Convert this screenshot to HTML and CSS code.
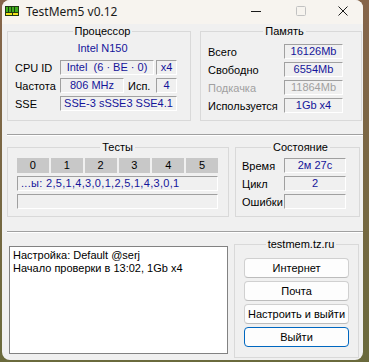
FILE: index.html
```html
<!DOCTYPE html>
<html lang="ru">
<head>
    <meta charset="UTF-8">
    <title>TestMem5 v0.12</title>
    <link rel="stylesheet" href="styles.css">
</head>
<body>

<div class="window">

    <!-- Title bar -->
    <div class="titlebar">
        <svg class="app-icon" width="14" height="10" viewBox="0 0 14 10">
            <rect x="0" y="0" width="14" height="10" fill="#1e3a10"/>
            <rect x="1" y="1" width="12" height="5" fill="#3fae1c"/>
            <rect x="3" y="1" width="1" height="5" fill="#1e3a10"/>
            <rect x="6" y="1" width="1" height="5" fill="#1e3a10"/>
            <rect x="9" y="1" width="1" height="5" fill="#1e3a10"/>
            <rect x="1" y="7" width="12" height="2" fill="#f2e21a"/>
            <rect x="7" y="7" width="1" height="2" fill="#1e3a10"/>
        </svg>
        <span class="title">TestMem5 v0.12</span>
        <div class="caption">
            <div class="cap">
                <svg width="10" height="10" viewBox="0 0 10 10"><line x1="0" y1="5.5" x2="10" y2="5.5" stroke="#1a1a1a" stroke-width="1"/></svg>
            </div>
            <div class="cap">
                <svg width="10" height="10" viewBox="0 0 10 10"><rect x="0.5" y="0.5" width="9" height="9" rx="1" fill="none" stroke="#c2c2c2" stroke-width="1"/></svg>
            </div>
            <div class="cap cap-close">
                <svg width="10" height="10" viewBox="0 0 10 10"><path d="M0.5 0.5 L9.5 9.5 M9.5 0.5 L0.5 9.5" stroke="#1a1a1a" stroke-width="1"/></svg>
            </div>
        </div>
    </div>

    <div class="client">

        <!-- Processor / Memory -->
        <div class="row-top">
            <div class="group group-cpu">
                <div class="group-title">Процессор</div>
                <div class="cpu-name">Intel N150</div>
                <div class="fields">
                    <div class="frow">
                        <span class="lbl">CPU ID</span>
                        <span class="box w94">Intel&nbsp; (6 · BE · 0)</span>
                        <span class="box w21 ml2">x4</span>
                    </div>
                    <div class="frow">
                        <span class="lbl">Частота</span>
                        <span class="box w64">806 MHz</span>
                        <span class="lbl-small">Исп.</span>
                        <span class="box w21">4</span>
                    </div>
                    <div class="frow">
                        <span class="lbl">SSE</span>
                        <span class="box w117">SSE-3 sSSE3 SSE4.1</span>
                    </div>
                </div>
            </div>

            <div class="group group-mem">
                <div class="group-title">Память</div>
                <div class="fields mem-fields">
                    <div class="frow">
                        <span class="lbl lbl-mem">Всего</span>
                        <span class="box w59">16126Mb</span>
                    </div>
                    <div class="frow">
                        <span class="lbl lbl-mem">Свободно</span>
                        <span class="box w59">6554Mb</span>
                    </div>
                    <div class="frow disabled">
                        <span class="lbl lbl-mem">Подкачка</span>
                        <span class="box w59">11864Mb</span>
                    </div>
                    <div class="frow">
                        <span class="lbl lbl-mem">Используется</span>
                        <span class="box w59">1Gb x4</span>
                    </div>
                </div>
            </div>
        </div>

        <div class="sep sep-1"></div>

        <!-- Tests / State -->
        <div class="row-mid">
            <div class="group group-tests">
                <div class="group-title">Тесты</div>
                <div class="test-head">
                    <span>0</span><span>1</span><span>2</span><span>3</span><span>4</span><span>5</span>
                </div>
                <div class="box test-line">...ы: 2,5,1,4,3,0,1,2,5,1,4,3,0,1</div>
                <div class="box test-line"></div>
            </div>

            <div class="group group-state">
                <div class="group-title">Состояние</div>
                <div class="fields state-fields">
                    <div class="frow">
                        <span class="lbl lbl-state">Время</span>
                        <span class="box w62">2м 27с</span>
                    </div>
                    <div class="frow">
                        <span class="lbl lbl-state">Цикл</span>
                        <span class="box w62">2</span>
                    </div>
                    <div class="frow">
                        <span class="lbl lbl-state">Ошибки</span>
                        <span class="box w62"></span>
                    </div>
                </div>
            </div>
        </div>

        <div class="sep sep-2"></div>

        <!-- Log / links -->
        <div class="row-bottom">
            <div class="log">
                <div>Настройка: Default @serj</div>
                <div>Начало проверки в 13:02, 1Gb x4</div>
            </div>

            <div class="group group-site">
                <div class="group-title">testmem.tz.ru</div>
                <div class="buttons">
                    <button class="btn">Интернет</button>
                    <button class="btn">Почта</button>
                    <button class="btn">Настроить и выйти</button>
                    <button class="btn btn-default">Выйти</button>
                </div>
            </div>
        </div>

    </div>
</div>

</body>
</html>
```

FILE: styles.css
```css
body {
    margin: 0;
    width: 369px;
    height: 362px;
    overflow: hidden;
    background: linear-gradient(to bottom, #86654a, #6a6a3c);
}

.window {
    margin-left: 2px;
    width: 361px;
    height: 360px;
    background: #f0f0f0;
    border-radius: 8px;
    overflow: hidden;
    font-family: "Liberation Sans", Arial, sans-serif;
    font-size: 11px;
    color: #000;
}

/* Title bar */
.titlebar {
    height: 24px;
    display: flex;
    align-items: center;
    padding-bottom: 2px;
    box-sizing: border-box;
    background: #f7f4ef;
}

.app-icon {
    margin-left: 3px;
}

.title {
    margin-left: 7px;
    font-family: "Noto Sans", sans-serif;
    font-size: 12px;
    color: #1a1a1a;
}

.caption {
    margin-left: auto;
    display: flex;
}

.cap {
    width: 45px;
    display: flex;
    justify-content: center;
}

.cap-close {
    width: 40px;
}

/* Client area */
.client {
    padding-left: 5px;
}

.row-top {
    display: flex;
    gap: 9px;
    margin-top: 7px;
    height: 90px;
}

.group {
    box-sizing: border-box;
    border: 1px solid #d9d9d9;
}

.group-title {
    width: fit-content;
    margin: -7px auto 0;
    padding: 0 2px;
    background: #f0f0f0;
    line-height: 13px;
}

.group-cpu {
    width: 184px;
    padding-left: 7px;
}

.group-mem {
    width: 162px;
    padding-left: 7px;
}

.cpu-name {
    margin-top: 4px;
    line-height: 13px;
    text-align: center;
    color: #14149a;
}

.fields {
    margin-top: 5px;
    display: flex;
    flex-direction: column;
    gap: 3px;
}

.mem-fields {
    margin-top: 6px;
}

.state-fields {
    margin-top: 4px;
}

.frow {
    display: flex;
    align-items: center;
    height: 15px;
}

.lbl {
    width: 45px;
    flex: none;
}

.lbl-mem {
    width: 76px;
}

.lbl-state {
    width: 42px;
}

.lbl-small {
    width: 28px;
    margin-left: 4px;
}

.box {
    box-sizing: border-box;
    height: 15px;
    border: 1px solid;
    border-color: #a0a0a0 #ffffff #ffffff #a0a0a0;
    line-height: 13px;
    text-align: center;
    color: #14149a;
    white-space: nowrap;
    overflow: hidden;
}

.w21 { width: 21px; }
.w59 { width: 59px; }
.w62 { width: 62px; }
.w64 { width: 64px; }
.w94 { width: 94px; }
.w117 { width: 117px; }
.ml2 { margin-left: 2px; }

.disabled .lbl,
.disabled .box {
    color: #a0a0a0;
}

.sep {
    border-top: 1px solid #a0a0a0;
    border-bottom: 1px solid #ffffff;
}

.sep-1 {
    margin-top: 13px;
}

.sep-2 {
    margin-top: 14px;
}

.row-mid {
    display: flex;
    gap: 6px;
    margin-top: 11px;
    height: 70px;
}

.group-tests {
    width: 222px;
    padding: 0 10px 0 9px;
}

.test-head {
    margin-top: 4px;
    display: grid;
    grid-template-columns: repeat(6, 1fr);
    gap: 2px;
    height: 15px;
}

.test-head span {
    background: #c8c8c8;
    line-height: 15px;
    text-align: center;
}

.test-line {
    margin-top: 3px;
    padding-left: 3px;
    text-align: left;
    letter-spacing: 0.3px;
}

.group-state {
    width: 125px;
    padding-left: 6px;
}

.row-bottom {
    display: flex;
    gap: 6px;
    margin-top: 11px;
}

.log {
    box-sizing: border-box;
    width: 219px;
    height: 108px;
    margin: 2px 0 0 2px;
    padding: 2px 3px;
    background: #ffffff;
    border: 1px solid #828282;
    line-height: 13px;
}

.group-site {
    width: 125px;
    height: 114px;
    padding-left: 9px;
}

.buttons {
    margin-top: 7px;
    display: flex;
    flex-direction: column;
    gap: 3px;
}

.btn {
    box-sizing: border-box;
    width: 105px;
    height: 20px;
    padding: 0;
    font-family: "Liberation Sans", Arial, sans-serif;
    font-size: 11px;
    color: #000;
    background: #fdfdfd;
    border: 1px solid #d0d0d0;
    border-bottom-color: #bcbcbc;
    border-radius: 4px;
}

.btn-default {
    border-color: #0067c0;
}
```
